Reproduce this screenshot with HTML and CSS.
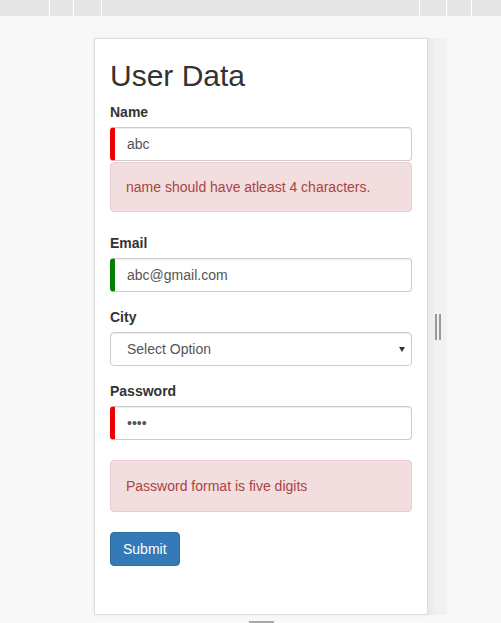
FILE: index.html
```html
<!DOCTYPE html>
<html>
<head>
<meta charset="utf-8">
<title>User Data</title>
<link rel="stylesheet" href="styles.css">
</head>
<body>
<div class="tabbar">
  <span class="seg s1"></span>
  <span class="seg s2"></span>
  <span class="seg s3"></span>
  <span class="seg s4"></span>
  <span class="seg s5"></span>
  <span class="seg s6"></span>
  <span class="seg s7"></span>
</div>
<div class="stage">
  <div class="card">
    <h2 class="title">User Data</h2>
    <form class="form">
      <div class="form-group">
        <label class="label" for="name">Name</label>
        <input class="control invalid" id="name" type="text" value="abc">
        <div class="alert alert-tight">name should have atleast 4 characters.</div>
      </div>
      <div class="form-group">
        <label class="label" for="email">Email</label>
        <input class="control valid" id="email" type="text" value="abc@gmail.com">
      </div>
      <div class="form-group">
        <label class="label" for="city">City</label>
        <div class="select-wrap">
          <select class="control select" id="city">
            <option>Select Option</option>
          </select>
        </div>
      </div>
      <div class="form-group">
        <label class="label" for="password">Password</label>
        <input class="control invalid" id="password" type="password" value="abcd">
        <div class="alert alert-spaced">Password format is five digits</div>
      </div>
      <button class="btn" type="button">Submit</button>
    </form>
  </div>
  <div class="splitter">
    <span class="grip"></span>
    <span class="grip"></span>
  </div>
</div>
<div class="footer">
  <span class="handle"></span>
</div>
</body>
</html>
```
FILE: styles.css
```css
html, body {
  margin: 0;
  padding: 0;
}
body {
  background: #f8f8f8;
  font-family: "Liberation Sans", Arial, sans-serif;
  font-size: 14px;
  line-height: 20px;
  color: #333;
  width: 501px;
  height: 623px;
  overflow: hidden;
}
.tabbar {
  display: flex;
  height: 16px;
  background: #e5e5e5;
}
.seg {
  border-right: 1px solid #ffffff;
  height: 16px;
}
.s1 { width: 49px; }
.s2 { width: 23px; }
.s3 { width: 27px; }
.s4 { flex: 1; }
.s5 { width: 26px; }
.s6 { width: 24px; }
.s7 { width: 29px; border-right: 0; }

.stage {
  display: flex;
  padding: 22px 0 0 94px;
}
.card {
  width: 334px;
  box-sizing: border-box;
  background: #fff;
  border: 1px solid #dcdcdc;
  padding: 0 15px 48px 15px;
  box-shadow: 0 0 6px rgba(0, 0, 0, 0.05);
}
.title {
  margin: 20px 0 10px;
  font-size: 30px;
  line-height: 33px;
  font-weight: normal;
  color: #333;
}
.form {
  margin: 0;
}
.form-group {
  margin-bottom: 15px;
}
.label {
  display: block;
  font-weight: bold;
  margin-bottom: 5px;
  line-height: 20px;
}
.control {
  display: block;
  width: 100%;
  height: 34px;
  box-sizing: border-box;
  margin: 0;
  padding: 6px 12px;
  font-family: "Liberation Sans", Arial, sans-serif;
  font-size: 14px;
  line-height: 20px;
  color: #555;
  background: #fff;
  border: 1px solid #ccc;
  border-radius: 4px;
  box-shadow: inset 0 1px 1px rgba(0, 0, 0, 0.075);
  outline: none;
}
.invalid {
  border-left: 5px solid #ee0000;
}
.valid {
  border-left: 5px solid #008000;
}
.select-wrap {
  position: relative;
}
.select {
  -webkit-appearance: none;
  appearance: none;
  padding-left: 16px;
}
.select-wrap::after {
  content: "";
  position: absolute;
  right: 7px;
  top: 15px;
  border-top: 5px solid #333;
  border-left: 3px solid transparent;
  border-right: 3px solid transparent;
  pointer-events: none;
}
.alert {
  background: #f2dede;
  border: 1px solid #ebccd1;
  color: #a94442;
  border-radius: 4px;
  padding: 15px;
}
.alert-tight {
  margin-top: 1px;
  padding: 14px 15px;
  margin-bottom: 21px;
}
.alert-spaced {
  margin-top: 20px;
  margin-bottom: 20px;
}
.btn {
  display: block;
  height: 34px;
  padding: 6px 12px;
  font-family: "Liberation Sans", Arial, sans-serif;
  font-size: 14px;
  line-height: 20px;
  color: #fff;
  background: #337ab7;
  border: 1px solid #2e6da4;
  border-radius: 4px;
}
.splitter {
  width: 19px;
  display: flex;
  align-items: center;
  justify-content: center;
  gap: 2px;
  background: linear-gradient(to right, #e8e8e8, #f1f1f1 40%, #f2f2f2);
}
.grip {
  width: 2px;
  height: 26px;
  background: #9a9a9a;
}
.footer {
  display: flex;
  justify-content: center;
  width: 334px;
  margin-left: 94px;
  padding-top: 6px;
}
.handle {
  width: 25px;
  height: 2px;
  background: #a8a8a8;
}
```
